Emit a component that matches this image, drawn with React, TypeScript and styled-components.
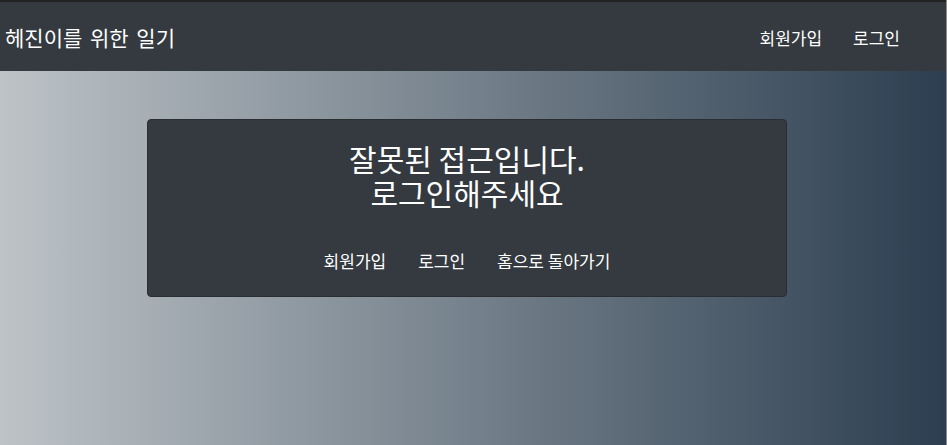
import React from 'react'
import styled, { createGlobalStyle } from 'styled-components'

const GlobalStyle = createGlobalStyle`
  html, body {
    margin: 0;
    padding: 0;
    height: 100%;
  }
  body {
    font-family: 'Noto Sans CJK KR', 'Noto Sans', sans-serif;
    color: white;
  }
  #root {
    height: 100%;
  }
`

const Page = styled.div`
  min-height: 100vh;
  display: flex;
  flex-direction: column;
  background: linear-gradient(to right, #bdc3c7, #2c3e50);
  border-right: 1px solid #8c8c8c;
  box-sizing: border-box;
`

const Navbar = styled.nav`
  height: 71px;
  box-sizing: border-box;
  border-top: 2px solid #222;
  background: #343a40;
  display: flex;
  align-items: center;
  justify-content: space-between;
  padding: 0 46px 0 5px;
`

const Brand = styled.a`
  font-size: 21px;
  word-spacing: 3px;
  color: white;
  text-decoration: none;
  margin-top: 1px;
`

const NavLinks = styled.div`
  display: flex;
  gap: 31px;
  margin-top: 1px;
`

const NavLink = styled.a`
  font-size: 17px;
  color: white;
  text-decoration: none;
`

const Main = styled.main`
  display: flex;
  justify-content: center;
  padding: 48px 12px 0 0;
`

const Card = styled.section`
  width: 640px;
  box-sizing: border-box;
  background: #343a40;
  border: 1px solid #2a2e33;
  border-radius: 4px;
  padding: 21px 0 22px;
  display: flex;
  flex-direction: column;
  align-items: center;
`

const Title = styled.h1`
  margin: 0;
  font-size: 30px;
  font-weight: 400;
  line-height: 34px;
  text-align: center;
`

const Actions = styled.div`
  display: flex;
  gap: 32px;
  margin-top: 39px;
`

const ActionLink = styled.a`
  font-size: 17px;
  line-height: 26px;
  color: white;
  text-decoration: none;
`

export default function App() {
  return (
    <>
      <GlobalStyle />
      <Page>
        <Navbar>
          <Brand href="#">헤진이를 위한 일기</Brand>
          <NavLinks>
            <NavLink href="#">회원가입</NavLink>
            <NavLink href="#">로그인</NavLink>
          </NavLinks>
        </Navbar>
        <Main>
          <Card>
            <Title>
              잘못된 접근입니다.
              <br />
              로그인해주세요
            </Title>
            <Actions>
              <ActionLink href="#">회원가입</ActionLink>
              <ActionLink href="#">로그인</ActionLink>
              <ActionLink href="#">홈으로 돌아가기</ActionLink>
            </Actions>
          </Card>
        </Main>
      </Page>
    </>
  )
}
